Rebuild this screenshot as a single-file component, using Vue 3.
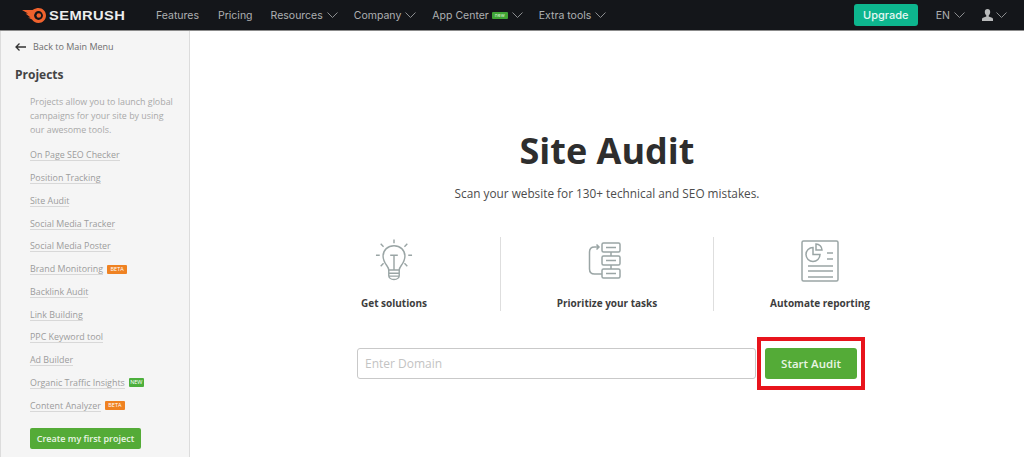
<script setup>
const navItems = [
  { label: 'Features' },
  { label: 'Pricing' },
  { label: 'Resources', arrow: true },
  { label: 'Company', arrow: true },
  { label: 'App Center', arrow: true, isNew: true },
  { label: 'Extra tools', arrow: true }
]

const tools = [
  { label: 'On Page SEO Checker' },
  { label: 'Position Tracking' },
  { label: 'Site Audit' },
  { label: 'Social Media Tracker' },
  { label: 'Social Media Poster' },
  { label: 'Brand Monitoring', badge: 'beta' },
  { label: 'Backlink Audit' },
  { label: 'Link Building' },
  { label: 'PPC Keyword tool' },
  { label: 'Ad Builder' },
  { label: 'Organic Traffic Insights', badge: 'new' },
  { label: 'Content Analyzer', badge: 'beta' }
]
</script>

<template>
  <div class="page">
    <header class="topbar">
      <div class="logo">
        <svg width="24" height="15" viewBox="0 0 24 15">
          <path d="M0 2h10.500C13 .5 15 0 16.500 0 20.600 0 24 3.300 24 7.500S20.600 15 16.500 15c-3 0-5-1.500-6.500-3.500L6 9.500h2.500L3.500 5.500H6L0 2z" fill="#f0622d" />
          <circle cx="16.500" cy="7.500" r="4.400" fill="#14161a" />
          <circle cx="16.800" cy="7.500" r="2.300" fill="#f0622d" />
        </svg>
        <span>SEMRUSH</span>
      </div>
      <nav class="nav">
        <a v-for="item in navItems" :key="item.label" class="nav-item">
          {{ item.label }}
          <span v-if="item.isNew" class="nav-new">new</span>
          <svg v-if="item.arrow" class="chev" width="11" height="6" viewBox="0 0 11 6"><path d="M.5.500l5 5 5-5" /></svg>
        </a>
      </nav>
      <div class="top-right">
        <button class="upgrade">Upgrade</button>
        <a class="nav-item">
          EN
          <svg class="chev" width="11" height="6" viewBox="0 0 11 6"><path d="M.5.500l5 5 5-5" /></svg>
        </a>
        <a class="nav-item user">
          <svg width="11" height="12" viewBox="0 0 11 12"><path d="M5.500 0C7.300 0 8.200 1.300 8.200 3c0 1.500-.7 2.800-1.500 3.400v1.100c1.500.5 4.300 1 4.300 2.500V12H0v-2c0-1.500 2.800-2 4.300-2.500V6.400C3.500 5.800 2.800 4.500 2.800 3c0-1.700.9-3 2.700-3z" fill="#b9babb" /></svg>
          <svg class="chev" width="11" height="6" viewBox="0 0 11 6"><path d="M.5.500l5 5 5-5" /></svg>
        </a>
      </div>
    </header>

    <div class="body">
      <aside class="sidebar">
        <a class="back">
          <svg width="11" height="8" viewBox="0 0 11 8"><path d="M4.500.500L1 4l3.500 3.500M1 4h10" /></svg>
          Back to Main Menu
        </a>
        <h2 class="side-title">Projects</h2>
        <div class="side-content">
          <p class="side-text">Projects allow you to launch global campaigns for your site by using our awesome tools.</p>
          <ul class="tools">
            <li v-for="tool in tools" :key="tool.label">
              <a>{{ tool.label }}</a>
              <span v-if="tool.badge" class="badge" :class="tool.badge">{{ tool.badge }}</span>
            </li>
          </ul>
          <button class="create">Create my first project</button>
        </div>
      </aside>

      <main class="main">
        <h1>Site Audit</h1>
        <p class="lead">Scan your website for 130+ technical and SEO mistakes.</p>

        <div class="features">
          <div class="feature">
            <svg class="icon" width="38" height="45" viewBox="0 0 40 44">
              <path d="M20 1v4M6 5.500l3 3M34 5.500l-3 3M1 17.500h4M35 17.500h4M6 29l3-3M34 29l-3-3" />
              <path d="M14.500 33c0-4-6-7-6-14.500C8.500 12 13.500 7.500 20 7.500s11.500 4.500 11.500 11c0 7.500-6 10.500-6 14.500z" />
              <path d="M16 17.500h8M20 17.500V33M14.500 33v6c0 2 2 4 5.500 4s5.500-2 5.500-4v-6M14.500 36.500h11M14.500 39.500h11" />
            </svg>
            <span>Get solutions</span>
          </div>
          <div class="feature">
            <svg class="icon tasks" width="33" height="37" viewBox="0 0 33 37">
              <rect x="14" y="1" width="18" height="9" rx="1.500" />
              <rect x="14" y="14" width="18" height="9" rx="1.500" />
              <rect x="14" y="27" width="18" height="9" rx="1.500" />
              <path d="M18 5.500h10M18 18.500h10M18 31.500h10M23 10v4M23 23v4" />
              <path d="M11 5H6.500C3 5 1.500 7 1.500 10v17c0 3 1.500 5 5 5H14M8.500 2.500L11 5 8.500 7.500" />
            </svg>
            <span>Prioritize your tasks</span>
          </div>
          <div class="feature">
            <svg class="icon report" width="38" height="42" viewBox="0 0 38 42">
              <rect x="1" y="1" width="36" height="40" rx="1.500" />
              <path d="M12 7.500a7 7 0 1 0 7 7h-7z" />
              <path d="M15 4a6 6 0 0 1 6 6h-6zM26 13h6M26 19h6M7 26h25M7 31h25M7 37h25" />
            </svg>
            <span>Automate reporting</span>
          </div>
        </div>

        <form class="audit-form" @submit.prevent>
          <input type="text" placeholder="Enter Domain" />
          <div class="highlight">
            <button type="submit" class="start">Start Audit</button>
          </div>
        </form>
      </main>
    </div>
  </div>
</template>

<style>
html,
body {
  margin: 0;
  background: #fff;
  overflow: hidden;
}
</style>

<style scoped>
.page {
  width: 1024px;
  height: 457px;
  display: flex;
  flex-direction: column;
  overflow: hidden;
  font-family: 'Open Sans', sans-serif;
}

.topbar {
  flex: none;
  height: 31px;
  box-sizing: border-box;
  display: flex;
  align-items: center;
  padding-left: 22px;
  background: #14161a;
  border-bottom: 1px solid #8b8b8b;
  font-family: Inter, sans-serif;
}

.logo {
  display: flex;
  align-items: center;
  gap: 3px;
  width: 134px;
  flex: none;
}

.logo span {
  font-family: 'Liberation Sans', sans-serif;
  font-size: 13px;
  font-weight: 700;
  letter-spacing: 0.35px;
  color: #eceded;
  transform: scaleX(1.13);
  transform-origin: left;
}

.nav {
  display: flex;
  gap: 18px;
}

.nav-item {
  display: flex;
  align-items: center;
  gap: 4px;
  font-size: 10.500px;
  color: #aeb0b2;
  white-space: nowrap;
}

.nav .nav-item:first-child {
  margin-right: 1px;
}

.nav .nav-item:nth-child(n + 3) {
  margin-right: -2px;
}

.nav-new {
  width: 16px;
  text-align: center;
  background: #3fa535;
  color: #d7f0d0;
  font-size: 5px;
  line-height: 7px;
  height: 7px;
  border-radius: 1px;
  margin-left: -1px;
}

.chev {
  fill: none;
  stroke: #8b8d8f;
  stroke-width: 1;
}

.top-right {
  margin-left: auto;
  display: flex;
  align-items: center;
  padding-right: 17px;
}

.upgrade {
  width: 64px;
  height: 22px;
  padding: 0;
  border: 0;
  border-radius: 3px;
  background: #0db58e;
  color: #e6f8f3;
  font-family: Inter, sans-serif;
  font-size: 11px;
  font-weight: 500;
  margin-right: 18px;
}

.user {
  margin-left: 17px;
  gap: 3px;
}

.body {
  flex: 1;
  display: flex;
  min-height: 0;
}

.sidebar {
  flex: none;
  width: 190px;
  box-sizing: border-box;
  background: #f5f5f5;
  border-left: 1px solid #dcdcdc;
  border-right: 1px solid #dcdcdc;
  padding: 10px 0 0 14px;
  font-family: 'Open Sans', sans-serif;
}

.back {
  display: flex;
  align-items: center;
  gap: 7px;
  font-size: 9px;
  line-height: 12px;
  color: #6e6e6e;
}

.back svg {
  fill: none;
  stroke: #333;
  stroke-width: 1.300;
}

.side-title {
  margin: 14px 0 0;
  font-size: 12px;
  line-height: 16px;
  font-weight: 700;
  color: #444;
}

.side-content {
  padding: 12px 0 0 15px;
}

.side-text {
  margin: 0;
  font-size: 8.900px;
  line-height: 14px;
  color: #a9a9a9;
  width: 150px;
}

.tools {
  list-style: none;
  margin: 7px 0 0;
  padding: 0;
}

.tools li {
  display: flex;
  align-items: center;
  gap: 4px;
  height: 22.750px;
  font-size: 8.900px;
  color: #9c9c9c;
}

.tools a {
  border-bottom: 1px solid #d8d8d8;
  line-height: 11px;
}

.badge {
  font-size: 5.500px;
  line-height: 9px;
  height: 9px;
  width: 20px;
  text-align: center;
  border-radius: 1px;
  text-transform: uppercase;
  color: #fff;
}

.beta {
  background: #ef8222;
}

.new {
  width: 15px;
  background: #4caf3c;
}

.create {
  display: block;
  margin-top: 11px;
  width: 111px;
  height: 21px;
  padding: 0;
  border: 0;
  border-radius: 2px;
  background: #54ab37;
  color: #e9f5e4;
  font-family: 'Open Sans', sans-serif;
  font-size: 9px;
  font-weight: 600;
}

.main {
  flex: 1;
  display: flex;
  flex-direction: column;
  align-items: center;
  color: #333;
}

h1 {
  margin: 97px 0 0;
  font-size: 36px;
  line-height: 46px;
  font-weight: 700;
  color: #2e2e2e;
}

.lead {
  margin: 10px 0 0;
  font-size: 11.800px;
  line-height: 18px;
  color: #4c4c4c;
}

.features {
  display: flex;
  margin-top: 35px;
  height: 74px;
}

.feature {
  width: 212px;
  display: flex;
  flex-direction: column;
  align-items: center;
  justify-content: space-between;
  border-right: 1px solid #dedede;
  font-size: 10px;
  font-weight: 700;
  color: #3d3d3d;
}

.feature:last-child {
  border-right: 0;
}

.feature span {
  line-height: 16px;
}

.icon {
  fill: none;
  stroke: #9aa5a5;
  stroke-width: 1.500;
}

.tasks {
  margin: 5px 5px 0 0;
}

.report {
  margin-top: 3px;
}

.audit-form {
  display: flex;
  align-items: center;
  margin: 26px 0 0 8px;
}

input {
  width: 399px;
  height: 31px;
  box-sizing: border-box;
  padding: 0 7px;
  margin-right: 1px;
  border: 1px solid #c9c9c9;
  border-radius: 3px;
  font-family: 'Open Sans', sans-serif;
  font-size: 12px;
  background: #fff;
}

input::placeholder {
  color: #c3c3c3;
}

.highlight {
  box-sizing: border-box;
  width: 108px;
  height: 53px;
  border: 4px solid #e8141c;
  display: flex;
  align-items: center;
  justify-content: center;
}

.start {
  width: 92px;
  height: 31px;
  padding: 0;
  border: 0;
  border-radius: 3px;
  background: #54ab37;
  color: #e9f5e4;
  font-family: 'Open Sans', sans-serif;
  font-size: 11.500px;
  font-weight: 600;
}
</style>
